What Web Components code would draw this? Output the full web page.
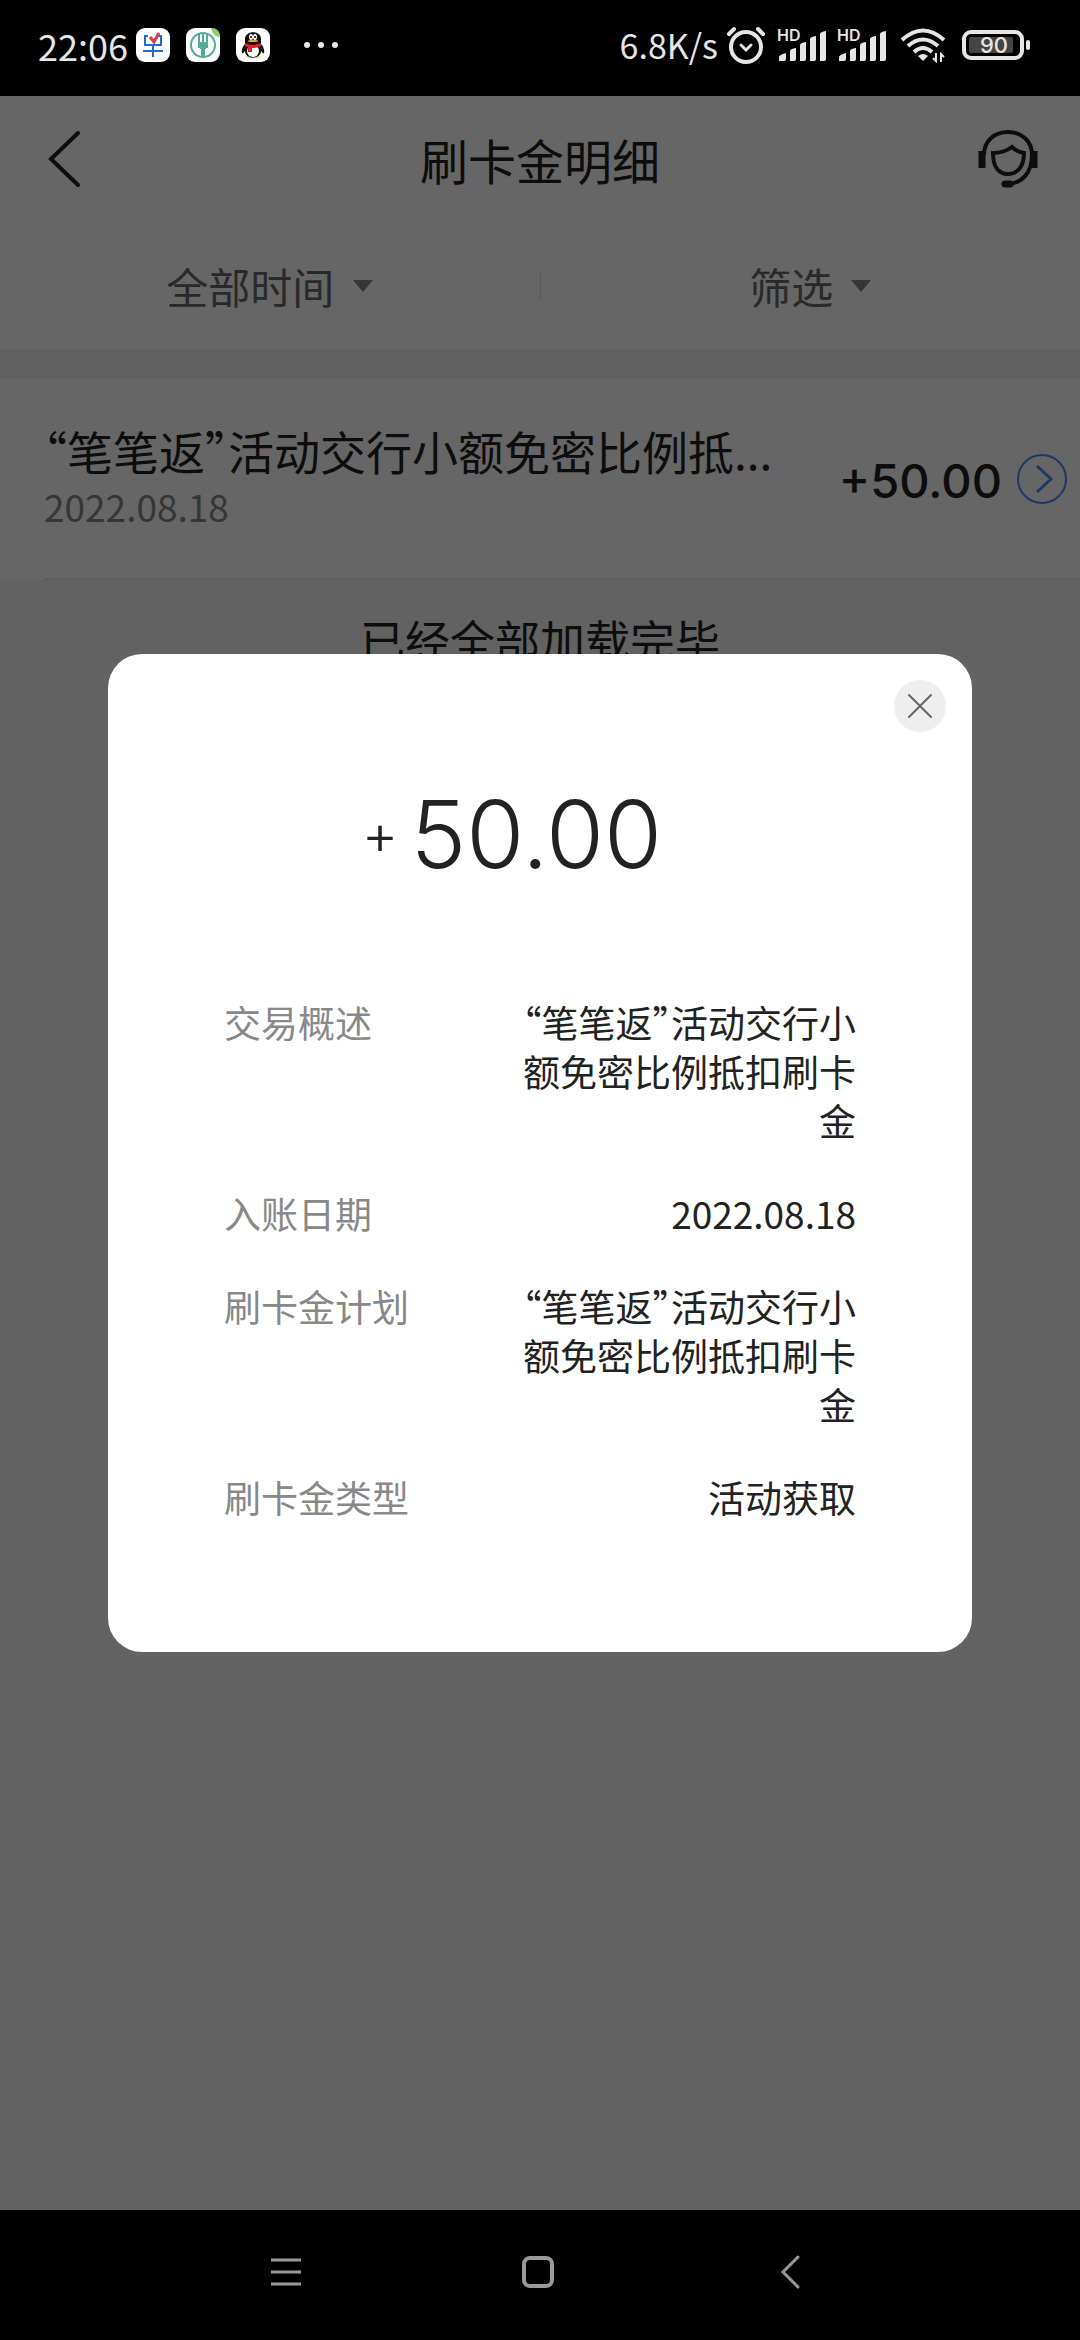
<!DOCTYPE html>
<html lang="zh-CN">
<head>
<meta charset="utf-8">
<meta name="viewport" content="width=device-width, initial-scale=1">
<title>刷卡金明细</title>
<style>
:root {
    --ink: #222;
    --gray-dark: #666;
    --gray: #888;
    --gray-light: #f4f4f4;
    --line: #ececec;
    --blue: #5588ff;
    --font-text: "Noto Sans CJK SC", sans-serif;
    --font-amount: Inter, sans-serif;
}

body {
    margin: 0;
    min-height: 100vh;
    display: flex;
    flex-direction: column;
    background: #000;
    color: var(--ink);
    font-family: var(--font-text);
}
</style>
</head>
<body>
<status-bar time="22:06" speed="6.8K/s" battery="90"></status-bar>

<app-screen>
    <page-header>
        <span slot="title">刷卡金明细</span>
    </page-header>
    <filter-bar></filter-bar>
    <record-item amount="+50.00">
        <span slot="name">“笔笔返”活动交行小额免密比例抵...</span>
        <time slot="date" datetime="2022-08-18">2022.08.18</time>
    </record-item>
    <span slot="footer">已经全部加载完毕</span>

    <detail-dialog slot="dialog" sign="+" amount="50.00">
        <detail-row label="交易概述">“笔笔返”活动交行小额免密比例抵扣刷卡金</detail-row>
        <detail-row label="入账日期">2022.08.18</detail-row>
        <detail-row label="刷卡金计划">“笔笔返”活动交行小额免密比例抵扣刷卡金</detail-row>
        <detail-row label="刷卡金类型">活动获取</detail-row>
    </detail-dialog>
</app-screen>

<nav-bar></nav-bar>

<script>
class BaseElement extends HTMLElement {
    connectedCallback() {
        const shadow = this.attachShadow({ mode: 'open' })
        shadow.innerHTML = this.render()
    }
}

class StatusBar extends BaseElement {
    signal() {
        return `
<svg width="52" height="44" viewBox="0 -4 52 44" fill="#e6e6e6">
    <text x="0" y="14" font-family="Inter, sans-serif" font-size="16" font-weight="600">HD</text>
    <path d="M2 34V30q0-2 7-4v6q0 2-2 2zM13 34V24q0-2 6-3v11q0 2-2 2zM23 34V18q0-2 6-3v17q0 2-2 2zM33 34V12q0-2 6-3v23q0 2-2 2zM43 34V7q0-2 6-3v28q0 2-2 2z"/>
</svg>`
    }

    render() {
        return `
<style>
:host {
    display: flex;
    flex-direction: row;
    align-items: center;
    height: 90px;
    padding: 0 50px 6px 38px;
    background: #000;
    color: #e6e6e6;
    font-size: 34px;
    line-height: 40px;
}

svg {
    display: block;
    flex: none;
}

.time {
    font-size: 36px;
}

.apps {
    display: flex;
    gap: 16px;
    margin-left: 8px;
}

.more {
    margin-left: 32px;
}

.right {
    display: flex;
    align-items: center;
    gap: 8px;
    margin-left: auto;
}
</style>

<span class="time">${this.getAttribute('time')}</span>
<div class="apps">
    <svg width="34" height="34" viewBox="0 0 34 34">
        <rect width="34" height="34" rx="9" fill="#fff"/>
        <path d="M12 8H9v9h16V8h-3M7 23h20M17 17v12" fill="none" stroke="#1c6fc4" stroke-width="2"/>
        <path d="M14 9l4 5 5-9" fill="none" stroke="#e0384d" stroke-width="3"/>
    </svg>
    <svg width="34" height="34" viewBox="0 0 34 34">
        <rect width="34" height="34" rx="9" fill="#fff"/>
        <circle cx="17" cy="17" r="12" fill="none" stroke="#52ab98" stroke-width="2"/>
        <path d="M13 5v14h3v9h2v-9h3V5M17 5v10" fill="none" stroke="#52ab98" stroke-width="2"/>
        <path d="M14 14h6v7h-6z" fill="#52ab98"/>
        <path d="M25 0q9 0 9 9q-7 0-9-9z" fill="#8fcf6a"/>
    </svg>
    <svg width="34" height="34" viewBox="0 0 34 34">
        <rect width="34" height="34" rx="9" fill="#fff"/>
        <path d="M9 11c0-9 16-9 16 0v5c2 2 4 6 3 9-1 1-2-1-3-2 0 9-16 9-16 0-1 1-2 3-3 2-1-3 1-7 3-9z" fill="#111"/>
        <ellipse cx="17" cy="23" rx="6" ry="6" fill="#fff"/>
        <ellipse cx="15" cy="9" rx="2" ry="3" fill="#fff"/>
        <ellipse cx="19" cy="9" rx="2" ry="3" fill="#fff"/>
        <circle cx="15" cy="9" r="1"/>
        <circle cx="19" cy="9" r="1"/>
        <ellipse cx="17" cy="13" rx="5" ry="1" fill="#f5b01e"/>
        <path d="M9 15q8 4 16 0v3q-4 2-9 2v4h-4v-5l-3-1z" fill="#dd2127"/>
        <path d="M9 29q3-2 6 1zM19 30q3-3 6-1z" fill="#f5b01e"/>
    </svg>
</div>
<svg class="more" width="38" height="8" viewBox="0 0 38 8" fill="#e6e6e6">
    <circle cx="5" cy="4" r="3"/><circle cx="19" cy="4" r="3"/><circle cx="33" cy="4" r="3"/>
</svg>

<div class="right">
    <span>${this.getAttribute('speed')}</span>
    <svg width="43" height="40" viewBox="0 0 43 40" fill="none" stroke="#e6e6e6" stroke-linecap="round">
        <circle cx="20" cy="22" r="15" stroke-width="4"/>
        <path d="M15 20l5 5 5-5" stroke-width="3"/>
        <path d="M3 9l5-5M32 4l5 5" stroke-width="4"/>
    </svg>
    ${this.signal()}
    ${this.signal()}
    <svg width="51" height="36" viewBox="-3 0 51 36" fill="none" stroke="#e6e6e6" stroke-width="4">
        <path d="M2 13q21-19 42 0M8 19q15-13 30 0M14 25q9-8 18 0"/>
        <path d="M18 29q5-4 10 0l-5 5z" fill="#e6e6e6" stroke="none"/>
        <path d="M36 26v8l-3-3M41 35v-8l3 3" stroke-width="2"/>
    </svg>
    <svg width="74" height="40" viewBox="-4 -4 74 40">
        <rect x="4" y="3" width="58" height="26" rx="7" fill="none" stroke="#e6e6e6" stroke-width="4"/>
        <rect x="9" y="8" width="44" height="16" rx="2" fill="#444"/>
        <rect x="66" y="11" width="4" height="10" rx="2" fill="#e6e6e6"/>
        <text x="34" y="24" text-anchor="middle" font-family="Inter, sans-serif" font-size="22" font-weight="500" fill="#e6e6e6">${this.getAttribute('battery')}</text>
    </svg>
</div>`
    }
}

class AppScreen extends BaseElement {
    render() {
        return `
<style>
:host {
    display: flex;
    flex-direction: column;
    flex: 1;
    position: relative;
    background: var(--gray-light);
}

footer {
    padding: 28px 0;
    text-align: center;
    font-size: 45px;
    line-height: 64px;
}

.mask {
    position: absolute;
    inset: 0;
    display: flex;
    align-items: center;
    justify-content: center;
    background: rgba(0, 0, 0, .6);
}
</style>

<slot></slot>
<footer><slot name="footer"></slot></footer>
<div class="mask"><slot name="dialog"></slot></div>`
    }
}

class PageHeader extends BaseElement {
    render() {
        return `
<style>
:host {
    display: block;
    background: #fff;
}

header {
    display: flex;
    flex-direction: row;
    align-items: center;
    justify-content: space-between;
    height: 126px;
    padding: 0 40px;
}

button {
    display: flex;
    padding: 0;
    border: none;
    background: none;
}

h1 {
    margin: 0;
    font-size: 48px;
    line-height: 64px;
    font-weight: 400;
}
</style>

<header>
    <button type="button" aria-label="返回">
        <svg width="64" height="64" viewBox="0 0 64 64" fill="none" stroke="#222" stroke-width="4" stroke-linecap="round">
            <path d="M38 6L11 32l27 26"/>
        </svg>
    </button>
    <h1><slot name="title"></slot></h1>
    <button type="button" aria-label="客服">
        <svg width="64" height="64" viewBox="0 0 64 64" fill="none" stroke="#222" stroke-width="4">
            <path d="M8 28C8 14 18 5 32 5s24 9 24 23c0 18-10 28-24 29"/>
            <path d="M17 26q11 0 19-6 5 5 12 6c0 14-7 21-16 21s-15-7-15-21z"/>
            <path d="M6 24v17M58 24v17" stroke-width="7"/>
            <path d="M29 57h5" stroke-width="7" stroke-linecap="round"/>
        </svg>
    </button>
</header>`
    }
}

class FilterBar extends BaseElement {
    render() {
        const arrow = '<svg width="20" height="12" viewBox="0 0 20 12"><path d="M0 0h20L10 12z" fill="#888"/></svg>'

        return `
<style>
:host {
    display: flex;
    flex-direction: row;
    align-items: center;
    height: 128px;
    background: #fff;
    border-bottom: 28px solid #f1f1f1;
}

label,
button {
    display: flex;
    flex: 1;
    align-items: center;
    justify-content: center;
    gap: 18px;
    padding: 0;
}

select,
button {
    appearance: none;
    border: none;
    background: none;
    color: var(--gray-dark);
    font-family: inherit;
    font-size: 42px;
    line-height: 64px;
}

select {
    padding: 0;
}

hr {
    width: 1px;
    height: 30px;
    margin: 0;
    border: none;
    background: #ddd;
}
</style>

<label>
    <select aria-label="时间"><option>全部时间</option></select>
    ${arrow}
</label>
<hr>
<button type="button">筛选${arrow}</button>`
    }
}

class RecordItem extends BaseElement {
    render() {
        return `
<style>
:host {
    display: flex;
    flex-direction: row;
    align-items: center;
    gap: 14px;
    height: 202px;
    padding-right: 12px;
    background: linear-gradient(var(--line), var(--line)) 44px 100% / 100% 2px no-repeat #fff;
}

.info {
    flex: 1;
    min-width: 0;
    padding: 0 40px 10px 44px;
}

.name {
    overflow: hidden;
    white-space: nowrap;
    font-size: 46px;
    font-feature-settings: "halt";
    line-height: 64px;
}

.date {
    color: var(--gray);
    font-size: 37px;
    line-height: 49px;
}

.amount {
    padding-top: 4px;
    font-family: var(--font-amount);
    font-size: 47px;
    font-weight: 500;
    line-height: 64px;
}

button {
    display: flex;
    padding: 0;
    border: none;
    background: none;
    color: var(--blue);
}
</style>

<div class="info">
    <div class="name"><slot name="name"></slot></div>
    <div class="date"><slot name="date"></slot></div>
</div>
<span class="amount">${this.getAttribute('amount')}</span>
<button type="button" aria-label="查看详情">
    <svg width="52" height="52" viewBox="0 0 52 52" fill="none" stroke="currentColor">
        <circle cx="26" cy="26" r="24" stroke-width="2"/>
        <path d="M21 13l14 13-14 13" stroke-width="3"/>
    </svg>
</button>`
    }
}

class DetailDialog extends BaseElement {
    connectedCallback() {
        super.connectedCallback()
        this.setAttribute('role', 'dialog')
        this.shadowRoot.querySelector('button')
            .addEventListener('click', () => this.remove())
    }

    render() {
        return `
<style>
:host {
    display: block;
    position: relative;
    width: 80%;
    box-sizing: border-box;
    padding: 130px 116px;
    border-radius: 34px;
    background: #fff;
}

button {
    position: absolute;
    top: 26px;
    right: 26px;
    display: flex;
    padding: 0;
    border: none;
    border-radius: 50%;
    background: #eee;
}

.amount {
    display: flex;
    align-items: center;
    justify-content: center;
    gap: 12px;
    margin: 0 56px 114px 0;
    font-family: var(--font-amount);
    font-size: 94px;
    font-weight: 300;
    line-height: 100px;
}

.sign {
    font-size: 56px;
}

.rows {
    display: flex;
    flex-direction: column;
    gap: 44px;
}
</style>

<button type="button" aria-label="关闭">
    <svg width="52" height="52" viewBox="0 0 52 52" fill="none" stroke="#666" stroke-width="2" stroke-linecap="round">
        <path d="M15 15l22 22M37 15L15 37"/>
    </svg>
</button>
<div class="amount">
    <span class="sign">${this.getAttribute('sign')}</span>
    <span>${this.getAttribute('amount')}</span>
</div>
<div class="rows"><slot></slot></div>`
    }
}

class DetailRow extends BaseElement {
    render() {
        return `
<style>
:host {
    display: flex;
    flex-direction: row;
    justify-content: space-between;
    font-size: 37px;
    line-height: 49px;
}

.label {
    color: var(--gray);
}

.value {
    width: 54%;
    font-feature-settings: "halt";
    text-align: right;
}
</style>

<span class="label">${this.getAttribute('label')}</span>
<span class="value"><slot></slot></span>`
    }
}

class NavBar extends BaseElement {
    render() {
        return `
<style>
:host {
    display: flex;
    flex-direction: row;
    align-items: center;
    justify-content: center;
    gap: 216px;
    height: 124px;
    padding: 0 4px 6px 0;
    background: #000;
}

button {
    display: flex;
    padding: 0;
    border: none;
    background: none;
}
</style>

<button type="button" aria-label="最近任务">
    <svg width="36" height="36" viewBox="0 0 36 36" stroke="#999" stroke-width="3">
        <path d="M3 6h30M3 18h30M3 30h30"/>
    </svg>
</button>
<button type="button" aria-label="主屏幕">
    <svg width="36" height="36" viewBox="0 0 36 36" fill="none" stroke="#999" stroke-width="4">
        <rect x="4" y="4" width="28" height="28" rx="6"/>
    </svg>
</button>
<button type="button" aria-label="返回">
    <svg width="36" height="36" viewBox="0 0 36 36" fill="none" stroke="#999" stroke-width="3" stroke-linecap="round">
        <path d="M26 3L11 18l15 15"/>
    </svg>
</button>`
    }
}

customElements.define('status-bar', StatusBar)
customElements.define('app-screen', AppScreen)
customElements.define('page-header', PageHeader)
customElements.define('filter-bar', FilterBar)
customElements.define('record-item', RecordItem)
customElements.define('detail-dialog', DetailDialog)
customElements.define('detail-row', DetailRow)
customElements.define('nav-bar', NavBar)
</script>
</body>
</html>
